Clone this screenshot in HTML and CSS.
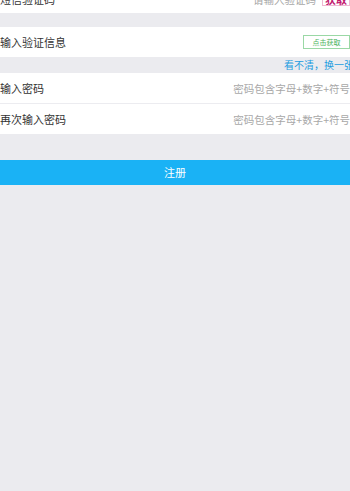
FILE: index.html
```html
<!DOCTYPE html>
<html lang="zh">
<head>
<meta charset="utf-8">
<link rel="stylesheet" href="styles.css">
</head>
<body>
<div class="page">
  <div class="group first">
    <div class="row">
      <span class="label">短信验证码</span>
      <span class="right">
        <span class="ph">请输入验证码</span>
        <span class="get-btn">获取</span>
      </span>
    </div>
  </div>
  <div class="group">
    <div class="row">
      <span class="label">输入验证信息</span>
      <span class="captcha-btn">点击获取</span>
    </div>
  </div>
  <div class="refresh">看不清，换一张</div>
  <div class="group">
    <div class="row divided">
      <span class="label">输入密码</span>
      <span class="ph">密码包含字母+数字+符号</span>
    </div>
    <div class="row">
      <span class="label">再次输入密码</span>
      <span class="ph">密码包含字母+数字+符号</span>
    </div>
  </div>
  <div class="submit">注册</div>
</div>
</body>
</html>
```
FILE: styles.css
```css
html, body {
  margin: 0;
  padding: 0;
  background: #ebebef;
  height: 100%;
  overflow: hidden;
}
body {
  font-family: "Noto Sans CJK SC", "Noto Sans", sans-serif;
  color: #333;
}
.page {
  display: flex;
  flex-direction: column;
}
.group {
  background: #fff;
}
.group.first {
  margin-top: -15px;
  margin-bottom: 14px;
}
.group.first .row {
  height: 28px;
}
.row {
  height: 30px;
  display: flex;
  align-items: center;
  justify-content: space-between;
  font-size: 11px;
}
.row.divided {
  border-bottom: 1px solid #ececf0;
}
.label {
  color: #333;
}
.right {
  display: flex;
  align-items: center;
  gap: 6px;
}
.ph {
  color: #a8a8a8;
  font-size: 10.5px;
}
.get-btn {
  color: #c2186f;
  border: 1px solid #efb8d3;
  font-size: 11px;
  line-height: 12px;
  padding: 0 2px;
  font-weight: bold;
}
.captcha-btn {
  width: 45px;
  height: 12px;
  border: 1px solid #9ad8a5;
  color: #4cb35c;
  font-size: 7px;
  line-height: 12px;
  text-align: center;
}
.refresh {
  height: 16px;
  line-height: 16px;
  text-align: right;
  color: #1c9ce0;
  font-size: 10px;
  margin-right: -4px;
}
.submit {
  margin-top: 26px;
  height: 25px;
  line-height: 25px;
  background: #1ab2f5;
  color: #fff;
  text-align: center;
  font-size: 11px;
}
```
